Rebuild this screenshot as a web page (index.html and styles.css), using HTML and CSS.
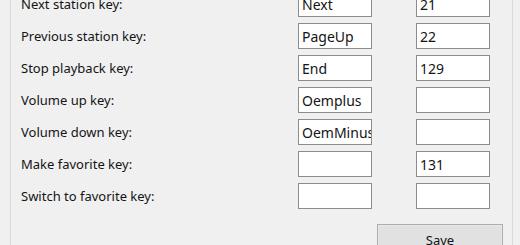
FILE: index.html
```html
<!DOCTYPE html>
<html lang="en">
<head>
    <meta charset="UTF-8">
    <title>Hotkeys</title>
    <link rel="stylesheet" href="styles.css">
</head>
<body>

<div class="panel">
    <div class="key-grid">
        <label class="key-label">Next station key:</label>
        <input type="text" class="key-field" value="Next">
        <input type="text" class="key-field code" value="21">

        <label class="key-label">Previous station key:</label>
        <input type="text" class="key-field" value="PageUp">
        <input type="text" class="key-field code" value="22">

        <label class="key-label">Stop playback key:</label>
        <input type="text" class="key-field" value="End">
        <input type="text" class="key-field code" value="129">

        <label class="key-label">Volume up key:</label>
        <input type="text" class="key-field" value="Oemplus">
        <input type="text" class="key-field code" value="">

        <label class="key-label">Volume down key:</label>
        <input type="text" class="key-field" value="OemMinus">
        <input type="text" class="key-field code" value="">

        <label class="key-label">Make favorite key:</label>
        <input type="text" class="key-field" value="">
        <input type="text" class="key-field code" value="131">

        <label class="key-label">Switch to favorite key:</label>
        <input type="text" class="key-field" value="">
        <input type="text" class="key-field code" value="">
    </div>

    <div class="button-row">
        <button class="save-button">Save</button>
    </div>
</div>

</body>
</html>
```

FILE: styles.css
```css
    body {
        margin: 0;
        padding: 0;
        font-family: 'Noto Sans', sans-serif;
        background-color: #F0F0F0;
        overflow: hidden;
        height: 245px;
    }
    .panel {
        margin-left: 10px;
        width: 503px;
        height: 300px;
        border-left: 1px solid #DADADA;
        border-right: 1px solid #DADADA;
        box-sizing: border-box;
    }
    .key-grid {
        display: grid;
        grid-template-columns: 277px 74px 118px;
        grid-auto-rows: 26px;
        row-gap: 6px;
        align-items: center;
        margin-top: -9px;
        padding-left: 10px;
    }
    .key-label {
        font-size: 13px;
        color: #141414;
    }
    .key-field {
        width: 74px;
        height: 26px;
        box-sizing: border-box;
        border: 1px solid #8C8C8C;
        background-color: #FFFFFF;
        padding: 0 0 0 3px;
        font-size: 14px;
        font-family: 'Noto Sans', sans-serif;
        color: #141414;
        outline: none;
    }
    .key-field.code {
        justify-self: end;
    }
    .button-row {
        display: flex;
        justify-content: flex-end;
        padding-right: 9px;
        margin-top: 15px;
    }
    .save-button {
        width: 126px;
        height: 32px;
        background-color: #E1E1E1;
        border: 1px solid #ADADAD;
        box-shadow: inset 0 0 0 1px #E8E8E8;
        font-size: 13px;
        font-family: 'Noto Sans', sans-serif;
        color: #141414;
        padding: 0;
    }
```
